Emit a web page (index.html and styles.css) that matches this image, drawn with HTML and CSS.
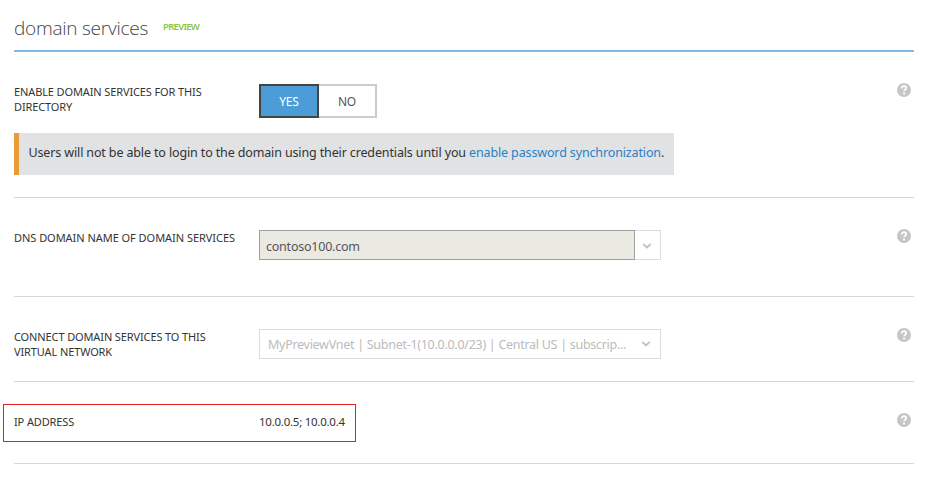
FILE: index.html
```html
<!DOCTYPE html>
<html lang="en">
<head>
<meta charset="utf-8">
<title>domain services</title>
<link rel="stylesheet" href="styles.css">
</head>
<body>
<svg class="defs" width="0" height="0" aria-hidden="true">
  <symbol id="help" viewBox="0 0 14 14"><circle cx="7" cy="7" r="7" fill="#c6c6c6"/><path d="M4.8 5.4V4.9C4.9 3.7 5.8 3.2 7 3.2c1.3 0 2.2.7 2.2 1.8 0 1.6-2 1.6-2 3.3" fill="none" stroke="#fff" stroke-width="1.8"/><path d="M6.1 9.5h2v1.9h-2z" fill="#fff"/></symbol>
  <symbol id="chevron" viewBox="0 0 10 6"><path d="M1.3 1 5 4.5 8.7 1" fill="none" stroke="#c4c4c4" stroke-width="1.9"/></symbol>
</svg>
<main class="page">
  <header class="header"><h1 class="title">domain services</h1><span class="tag">PREVIEW</span></header>
  <section class="row row-enable">
    <div class="fields">
      <div class="label">ENABLE DOMAIN SERVICES FOR THIS<br>DIRECTORY</div>
      <div class="toggle"><button class="yes">YES</button><button class="no">NO</button></div>
      <svg class="help"><use href="#help"/></svg>
    </div>
    <div class="note">Users will not be able to login to the domain using their credentials until you <a class="link">enable password synchronization</a>.</div>
  </section>
  <section class="row row-dns">
    <div class="fields">
      <div class="label">DNS DOMAIN NAME OF DOMAIN SERVICES</div>
      <div class="combo"><div class="combo-value">contoso100.com</div><div class="combo-button"><svg class="chevron"><use href="#chevron"/></svg></div></div>
      <svg class="help"><use href="#help"/></svg>
    </div>
  </section>
  <section class="row row-network">
    <div class="fields">
      <div class="label">CONNECT DOMAIN SERVICES TO THIS<br>VIRTUAL NETWORK</div>
      <div class="select"><span class="select-text">MyPreviewVnet | Subnet-1(10.0.0.0/23) | Central US | subscrip...</span><svg class="chevron"><use href="#chevron"/></svg></div>
      <svg class="help"><use href="#help"/></svg>
    </div>
  </section>
  <section class="row row-ip">
    <div class="fields">
      <div class="highlight"><div class="label">IP ADDRESS</div><span class="ip">10.0.0.5; 10.0.0.4</span></div>
      <svg class="help"><use href="#help"/></svg>
    </div>
  </section>
</main>
</body>
</html>
```
FILE: styles.css
```css
* { box-sizing: border-box; }
body { margin: 0; background: #fff; color: #333; font: 12.5px/18px "Noto Sans", "Open Sans", sans-serif; }
.defs { display: block; }
.page { width: 900px; margin-left: 14px; }
.header { display: flex; height: 52px; border-bottom: 2px solid #83b9e7; }
.title { margin: 0; padding-top: 14px; width: 149px; font: 300 19px/28px "Open Sans", sans-serif; letter-spacing: -0.25px; color: #444; white-space: nowrap; }
.tag { padding-top: 18px; font: 600 9.5px/18px "Noto Sans", "Open Sans", sans-serif; color: #8cc63f; letter-spacing: -0.7px; }
.row { border-bottom: 1px solid #d6d6d6; }
.row-enable { height: 146px; padding-top: 32px; }
.row-dns { height: 99px; padding-top: 32px; }
.row-network { height: 85px; padding-top: 32px; }
.row-ip { height: 82px; padding-top: 22px; }
.fields { display: flex; align-items: flex-start; }
.label { width: 245px; font-size: 11px; line-height: 15px; letter-spacing: -0.12px; white-space: nowrap; }
.row-dns .label { letter-spacing: -0.04px; }
.help { flex: none; width: 14px; height: 14px; margin: -1px 3px 0 auto; }
.toggle { display: flex; }
.toggle button { height: 34px; padding: 1px 0 0; border: 2px solid #ccc; background: #fff; font: 12px/28px "Noto Sans", sans-serif; letter-spacing: -0.2px; color: #555; }
.toggle .yes { width: 60px; border-color: #444; background: #4c9cd8; color: #fff; }
.toggle .no { width: 58px; border-left: 0; }
.note { width: 660px; height: 42px; margin-top: 15px; padding: 11px 0 0 9.5px; border-left: 5px solid #e99b35; background: #e1e2e4; letter-spacing: -0.135px; white-space: nowrap; }
.link { color: #2b80c2; }
.combo { display: flex; width: 402px; height: 30px; }
.combo-value { width: 376px; padding: 7px 0 0 6px; border: 1px solid #a0a0a0; background: #eaeae2; color: #555; letter-spacing: -0.23px; }
.combo-button { width: 26px; padding: 12px 0 0 7px; border: 1px solid #dcdcdc; border-left: 0; }
.chevron { display: block; flex: none; width: 10px; height: 6px; }
.select { display: flex; align-items: center; justify-content: space-between; width: 402px; height: 30px; padding: 0 9px 0 8px; border: 1px solid #dcdcdc; color: #bbb; letter-spacing: -0.28px; white-space: nowrap; }
.select-text { padding-top: 2px; }
.highlight { display: flex; width: 353px; height: 38px; margin-left: -11px; padding: 9px 0 0 10px; border: 1px solid #e81c24; }
.ip { font-size: 11.5px; line-height: 16px; letter-spacing: -0.25px; white-space: nowrap; }
.row-ip .help { margin-top: 9px; }
```
